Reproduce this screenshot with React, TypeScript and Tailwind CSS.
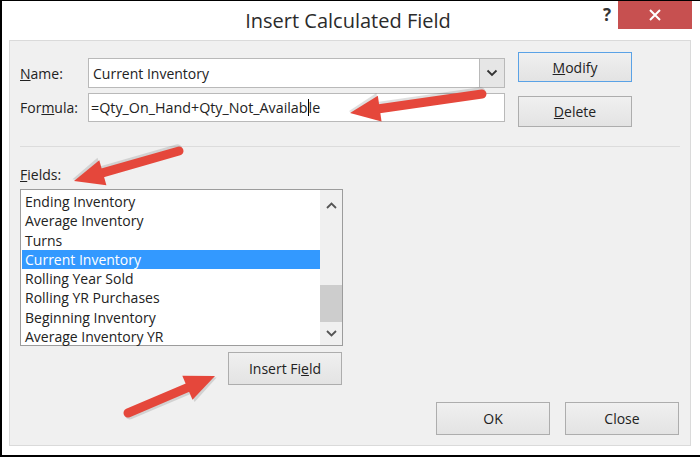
import React from "react";

const font = { fontFamily: '"Open Sans", "Noto Sans", sans-serif' };

const fields = [
  "Ending Inventory",
  "Average Inventory",
  "Turns",
  "Current Inventory",
  "Rolling Year Sold",
  "Rolling YR Purchases",
  "Beginning Inventory",
  "Average Inventory YR",
];

type ArrowProps = { x1: number; y1: number; x2: number; y2: number };

// red callout arrow, tail (x1,y1) -> tip (x2,y2)
const Arrow: React.FC<ArrowProps> = ({ x1, y1, x2, y2 }) => {
  const dx = x2 - x1;
  const dy = y2 - y1;
  const len = Math.sqrt(dx * dx + dy * dy);
  const angle = (Math.atan2(dy, dx) * 180) / Math.PI;
  const head = 30;
  return (
    <g transform={`translate(${x1} ${y1}) rotate(${angle})`}>
      <g transform="translate(1 2)" opacity="0.12">
        <line x1={0} y1={0} x2={len - head + 4} y2={0} stroke="#000" strokeWidth={10} strokeLinecap="round" />
        <polygon points={`${len},0 ${len - head},-14 ${len - head},14`} fill="#000" />
      </g>
      <line x1={0} y1={0} x2={len - head + 4} y2={0} stroke="#e5473b" strokeWidth={9} strokeLinecap="round" />
      <polygon points={`${len},0 ${len - head},-13 ${len - head},13`} fill="#e5473b" />
    </g>
  );
};

const Btn: React.FC<{ children: React.ReactNode; className?: string; active?: boolean }> = ({
  children,
  className = "",
  active,
}) => (
  <div
    className={`flex items-center justify-center text-[14px] text-[#222] bg-gradient-to-b from-[#f0f0f0] to-[#e3e3e3] border ${
      active ? "border-[#5aa2e6]" : "border-[#adadad]"
    } ${className}`}
  >
    {children}
  </div>
);

export default function App() {
  return (
    <div
      className="relative w-[700px] h-[457px] bg-white border-l-2 border-t border-b-2 border-black overflow-hidden"
      style={font}
    >
      {/* title bar */}
      <div className="relative h-[39px] flex items-center justify-center">
        <span className="text-[20px] text-[#2b2b2b] pr-[6px]">Insert Calculated Field</span>
        <span className="absolute left-[601px] top-[1px] text-[17px] font-bold text-[#333]">?</span>
        <div className="absolute left-[616px] top-0 w-[74px] h-[28px] bg-[#c75050] flex items-center justify-center">
          <svg width="12" height="12" viewBox="0 0 12 12">
            <path d="M1 1 L11 11 M11 1 L1 11" stroke="#fff" strokeWidth="2" />
          </svg>
        </div>
      </div>

      {/* dialog body */}
      <div className="ml-[7px] w-[682px] h-[406px] bg-[#f0f0f0] border border-[#dadada] text-[14px] text-[#222]">
        <div className="flex items-start pt-[11px] pl-[10px]">
          <div className="mt-[6px] flex flex-col gap-[5px]">
            <div className="flex items-center h-[30px]">
              <span className="w-[68px]">
                <u>N</u>ame:
              </span>
              <div className="w-[417px] h-[30px] bg-white border border-[#b9b9b9] flex items-center">
                <span className="flex-1 pl-[4px]">Current Inventory</span>
                <div className="w-[25px] h-full bg-[#e6e6e6] border-l border-[#b9b9b9] flex items-center justify-center">
                  <svg width="12" height="8" viewBox="0 0 12 8">
                    <path d="M1.5 1.5 L6 6 L10.5 1.5" fill="none" stroke="#333" strokeWidth="1.8" />
                  </svg>
                </div>
              </div>
            </div>
            <div className="flex items-center h-[29px]">
              <span className="w-[68px]">
                For<u>m</u>ula:
              </span>
              <div className="w-[417px] h-[29px] bg-white border border-[#b9b9b9] flex items-center pl-[2px] text-[14.3px]">
                <span>=Qty_On_Hand+Qty_Not_Availab</span>
                <span className="w-[1px] h-[17px] bg-black" />
                <span>le</span>
              </div>
            </div>
          </div>
          <div className="ml-[13px] flex flex-col gap-[14px]">
            <Btn active className="w-[114px] h-[30px]">
              <span>
                <u>M</u>odify
              </span>
            </Btn>
            <Btn className="w-[114px] h-[31px]">
              <span>
                <u>D</u>elete
              </span>
            </Btn>
          </div>
        </div>

        <div className="mt-[19px] ml-[10px] mr-[10px] h-px bg-[#dcdcdc]" />

        <div className="mt-[19px] ml-[10px] h-[18px] leading-[18px]">
          <u>F</u>ields:
        </div>

        <div className="mt-[5px] ml-[10px] w-[323px] h-[157px] bg-white border border-[#9c9c9c] flex">
          <div className="flex-1 pt-[2px] pl-[1px]">
            {fields.map((f) => (
              <div
                key={f}
                className={`h-[19.3px] leading-[19.3px] pl-[3px] ${
                  f === "Current Inventory" ? "bg-[#3399ff] text-white" : ""
                }`}
              >
                {f}
              </div>
            ))}
          </div>
          <div className="w-[22px] h-full bg-[#f0f0f0] flex flex-col items-center">
            <div className="h-[30px] flex items-center justify-center">
              <svg width="11" height="7" viewBox="0 0 11 7">
                <path d="M1 6 L5.5 1.5 L10 6" fill="none" stroke="#555" strokeWidth="1.8" />
              </svg>
            </div>
            <div className="mt-[65px] w-full h-[37px] bg-[#cdcdcd]" />
            <div className="flex-1 w-full flex items-center justify-center">
              <svg width="11" height="7" viewBox="0 0 11 7">
                <path d="M1 1 L5.5 5.5 L10 1" fill="none" stroke="#555" strokeWidth="1.8" />
              </svg>
            </div>
          </div>
        </div>

        <div className="mt-[6px] ml-[218px]">
          <Btn className="w-[114px] h-[33px]">
            <span>
              Insert Fi<u>e</u>ld
            </span>
          </Btn>
        </div>

        <div className="mt-[17px] flex justify-end gap-[15px] pr-[11px]">
          <Btn className="w-[114px] h-[33px]">OK</Btn>
          <Btn className="w-[114px] h-[33px]">Close</Btn>
        </div>
      </div>

      {/* callout arrows */}
      <svg className="absolute left-0 top-0 pointer-events-none" width="700" height="457">
        <Arrow x1={480} y1={93} x2={348} y2={112} />
        <Arrow x1={177} y1={150} x2={72} y2={180} />
        <Arrow x1={126} y1={412} x2={213} y2={375} />
      </svg>
    </div>
  );
}
